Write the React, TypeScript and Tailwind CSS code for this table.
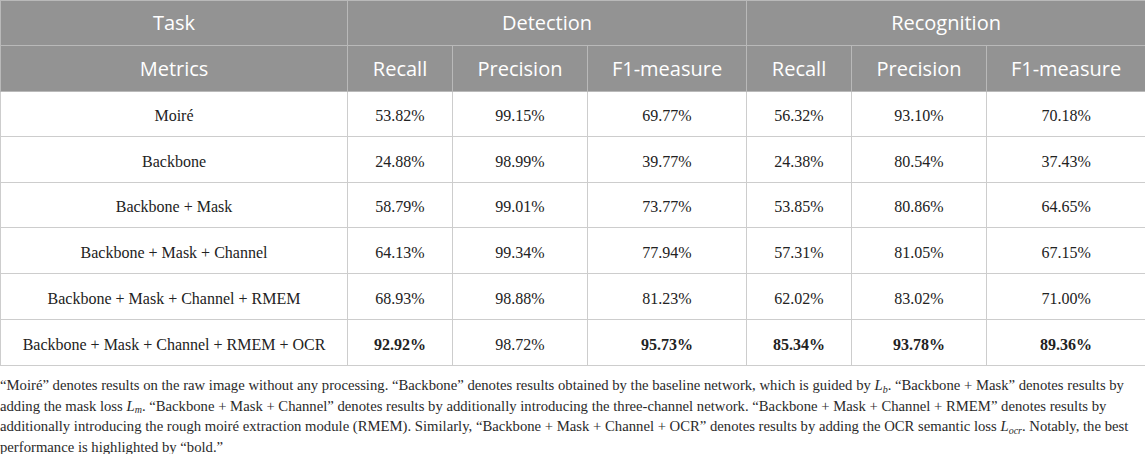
const widths = [347, 105, 135, 159, 105, 135, 159];

type Row = { label: string; values: string[]; bold?: boolean[] };

const rows: Row[] = [
  { label: 'Moiré', values: ['53.82%', '99.15%', '69.77%', '56.32%', '93.10%', '70.18%'] },
  { label: 'Backbone', values: ['24.88%', '98.99%', '39.77%', '24.38%', '80.54%', '37.43%'] },
  { label: 'Backbone + Mask', values: ['58.79%', '99.01%', '73.77%', '53.85%', '80.86%', '64.65%'] },
  {
    label: 'Backbone + Mask + Channel',
    values: ['64.13%', '99.34%', '77.94%', '57.31%', '81.05%', '67.15%'],
  },
  {
    label: 'Backbone + Mask + Channel + RMEM',
    values: ['68.93%', '98.88%', '81.23%', '62.02%', '83.02%', '71.00%'],
  },
  {
    label: 'Backbone + Mask + Channel + RMEM + OCR',
    values: ['92.92%', '98.72%', '95.73%', '85.34%', '93.78%', '89.36%'],
    bold: [true, false, true, true, true, true],
  },
];

const rowHeights = ['h-[45px]', 'h-[46px]', 'h-[45px]', 'h-[46px]', 'h-[46px]', 'h-[46px]'];

const headCell = 'border border-[#b9b9b9] font-normal text-white text-center';
const bodyCell = 'border border-[#cdcdcd] text-center text-[#222] pt-[4px]';

const Sub = ({ base, sub }: { base: string; sub: string }) => (
  <span className="italic">
    {base}
    <sub className="text-[10px] italic">{sub}</sub>
  </span>
);

export default function App() {
  return (
    <div className="w-[1145px] h-[454px] bg-white overflow-hidden">
      <table className="table-fixed border-collapse w-[1145px] font-['Liberation_Serif',serif] text-[16px]">
        <colgroup>
          {widths.map((w, i) => (
            <col key={i} style={{ width: w }} />
          ))}
        </colgroup>
        <thead className="bg-[#939393] font-['Open_Sans',sans-serif] text-[20px]">
          <tr className="h-[45px]">
            <th className={headCell}>Task</th>
            <th colSpan={3} className={headCell}>
              Detection
            </th>
            <th colSpan={3} className={headCell}>
              Recognition
            </th>
          </tr>
          <tr className="h-[46px]">
            <th className={headCell}>Metrics</th>
            <th className={headCell}>Recall</th>
            <th className={headCell}>Precision</th>
            <th className={headCell}>F1-measure</th>
            <th className={headCell}>Recall</th>
            <th className={headCell}>Precision</th>
            <th className={headCell}>F1-measure</th>
          </tr>
        </thead>
        <tbody>
          {rows.map((r, i) => (
            <tr key={r.label} className={rowHeights[i]}>
              <td className={bodyCell}>{r.label}</td>
              {r.values.map((v, j) => (
                <td key={j} className={`${bodyCell} ${r.bold?.[j] ? 'font-bold' : ''}`}>
                  {v}
                </td>
              ))}
            </tr>
          ))}
        </tbody>
      </table>

      <p className="mt-[9px] font-['Liberation_Serif',serif] text-[14.7px] leading-[20.5px] text-[#2a2a2a] whitespace-nowrap">
        “Moiré” denotes results on the raw image without any processing. “Backbone” denotes results
        obtained by the baseline network, which is guided by <Sub base="L" sub="b" />. “Backbone +
        Mask” denotes results by
        <br />
        adding the mask loss <Sub base="L" sub="m" />. “Backbone + Mask + Channel” denotes results by
        additionally introducing the three-channel network. “Backbone + Mask + Channel + RMEM” denotes
        results by
        <br />
        additionally introducing the rough moiré extraction module (RMEM). Similarly, “Backbone + Mask
        + Channel + OCR” denotes results by adding the OCR semantic loss <Sub base="L" sub="ocr" />.
        Notably, the best
        <br />
        performance is highlighted by “bold.”
      </p>
    </div>
  );
}
